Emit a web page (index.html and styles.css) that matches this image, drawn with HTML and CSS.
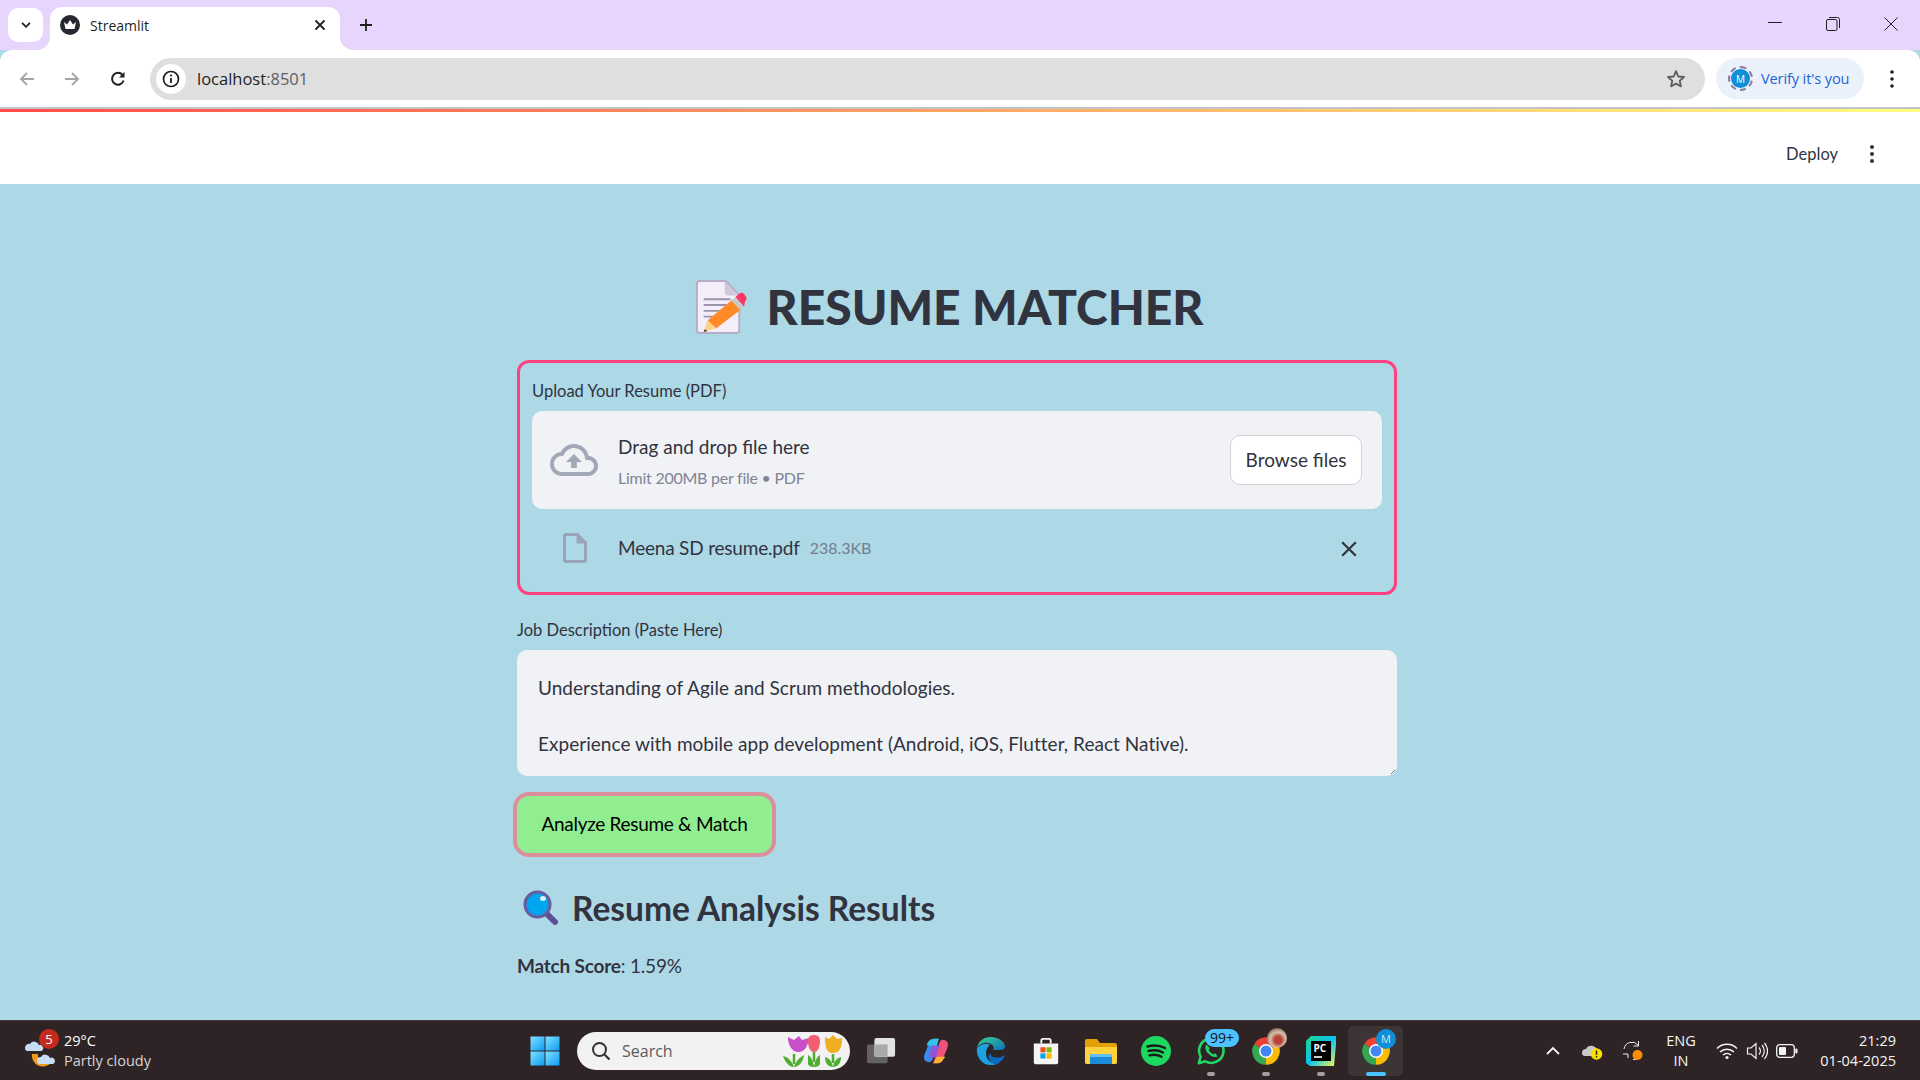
FILE: index.html
```html
<!DOCTYPE html>
<html lang="en">
<head>
<meta charset="utf-8">
<title>Streamlit</title>
<link rel="stylesheet" href="styles.css">
</head>
<body>
<svg class="defs" width="0" height="0" aria-hidden="true">
  <defs>
    <symbol id="chrome" viewBox="0 0 24 24">
      <path d="M12 12L2.47 6.5A11 11 0 0 1 21.53 6.5Z" fill="#EA4335"/>
      <path d="M12 12L21.53 6.5A11 11 0 0 1 12 23Z" fill="#FBBC04"/>
      <path d="M12 12L12 23A11 11 0 0 1 2.47 6.5Z" fill="#34A853"/>
      <circle cx="12" cy="12" r="5.6" fill="#fff"/>
      <circle cx="12" cy="12" r="4.4" fill="#4285F4"/>
    </symbol>
    <linearGradient id="winblue" x1="0" y1="0" x2="1" y2="1"><stop offset="0" stop-color="#7FE3FF"/><stop offset="1" stop-color="#0F9BF5"/></linearGradient>
    <linearGradient id="edgeA" x1="0" y1="0" x2="1" y2="1"><stop offset="0" stop-color="#3BD38C"/><stop offset="1" stop-color="#0C6FBF"/></linearGradient>
    <linearGradient id="pcA" x1="0" y1="0" x2="1" y2="1"><stop offset="0" stop-color="#21D789"/><stop offset=".5" stop-color="#07C3F2"/><stop offset="1" stop-color="#FCF84A"/></linearGradient>
  </defs>
</svg>

<header class="tabstrip">
  <button class="tab-menu"><svg viewBox="0 0 16 16" class="i14"><path d="M3.500 5.500L8 10l4.500-4.500" fill="none" stroke="#1f1f1f" stroke-width="2"/></svg></button>
  <div class="tab">
    <svg class="favicon" viewBox="0 0 20 20"><circle cx="10" cy="10" r="10" fill="#262730"/><path d="M4 7l3 2.500L10 5l3 4.500L16 7l-1.500 7h-9z" fill="#fff"/></svg>
    <span class="tab-title">Streamlit</span>
    <svg class="tab-x" viewBox="0 0 12 12"><path d="M1.500 1.500l9 9M10.500 1.500l-9 9" stroke="#1f1f1f" stroke-width="1.800"/></svg>
  </div>
  <svg class="newtab" viewBox="0 0 14 14"><path d="M7 1v12M1 7h12" stroke="#1f1f1f" stroke-width="1.800"/></svg>
  <div class="winctl">
    <svg viewBox="0 0 14 14" class="i14"><path d="M0 7.500h14" stroke="#222" stroke-width="1"/></svg>
    <svg viewBox="0 0 14 14" class="i14"><rect x=".5" y="2.500" width="10.500" height="11" rx="1.500" fill="none" stroke="#222"/><path d="M3 .5h8.500a2 2 0 0 1 2 2V11" fill="none" stroke="#222"/></svg>
    <svg viewBox="0 0 14 14" class="i14"><path d="M.5.500l13 13M13.500.5l-13 13" stroke="#222" stroke-width="1"/></svg>
  </div>
</header>

<nav class="toolbar">
  <svg class="nav-ic" viewBox="0 0 18 18"><path d="M16 9H3M9 3L3 9l6 6" fill="none" stroke="#a5a5a5" stroke-width="1.800"/></svg>
  <svg class="nav-ic" viewBox="0 0 18 18"><path d="M2 9h13M9 3l6 6-6 6" fill="none" stroke="#a5a5a5" stroke-width="1.800"/></svg>
  <svg class="nav-ic" viewBox="0 0 18 18"><path d="M14.600 10.500A5.900 5.900 0 1 1 13.500 5" fill="none" stroke="#1f1f1f" stroke-width="2"/><path d="M15.500 2v5.500H10z" fill="#1f1f1f"/></svg>
  <div class="omnibox">
    <span class="site-info"><svg viewBox="0 0 18 18" class="i18"><circle cx="9" cy="9" r="7.500" fill="none" stroke="#1f1f1f" stroke-width="1.700"/><path d="M9 8v5" stroke="#1f1f1f" stroke-width="1.800"/><circle cx="9" cy="5.500" r="1.100" fill="#1f1f1f"/></svg></span>
    <span class="url">localhost<span class="url-port">:8501</span></span>
    <svg class="star" viewBox="0 0 20 20"><path d="M10 2.200l2.300 5.300 5.700.5-4.300 3.800 1.300 5.600-5-3-5 3 1.300-5.600L2 8l5.700-.5z" fill="none" stroke="#5c5c5c" stroke-width="1.800" stroke-linejoin="round"/></svg>
  </div>
  <div class="verify">
    <span class="avatar-ring"><span class="avatar">M</span></span>
    <span>Verify it's you</span>
  </div>
  <svg class="kebab" viewBox="0 0 6 20"><circle cx="3" cy="3" r="1.800"/><circle cx="3" cy="10" r="1.800"/><circle cx="3" cy="17" r="1.800"/></svg>
</nav>
<div class="rule"></div>
<div class="rainbow"></div>

<div class="st-header">
  <span class="deploy">Deploy</span>
  <svg class="st-kebab" viewBox="0 0 6 20"><circle cx="3" cy="3" r="2"/><circle cx="3" cy="10" r="2"/><circle cx="3" cy="17" r="2"/></svg>
</div>

<main class="main">
  <div class="column">
    <h1 class="title">
      <svg class="doc-emoji" viewBox="0 0 54 56">
        <path d="M2 4a3 3 0 0 1 3-3h27l14 15v36a3 3 0 0 1-3 3H5a3 3 0 0 1-3-3z" fill="#F3EEF9" stroke="#B5ADC6" stroke-width="2"/>
        <path d="M31 1v12a3 3 0 0 0 3 3h12z" fill="#CFC8DA"/>
        <path d="M9 20h28M9 26h25M9 32h20M9 38h12" stroke="#9C94AC" stroke-width="2"/>
        <path d="M13 42L38 21l9 10-25 19z" fill="#FF8A27"/>
        <path d="M13 42l9 8-13 4z" fill="#FBD48A"/>
        <path d="M9 54l1-3 3 2z" fill="#3a3a3a"/>
        <path d="M38 21l4-3.500 9 10L47 31z" fill="#C9C9C9"/>
        <path d="M42 17.500l4-3.500a4 4 0 0 1 5 .5l1.500 2a4 4 0 0 1-.5 5.500L51 27.500z" fill="#FF3566"/>
      </svg>
      <span>RESUME MATCHER</span>
    </h1>

    <section class="upload-card">
      <label class="field-label">Upload Your Resume (PDF)</label>
      <div class="dropzone">
        <svg class="cloud" viewBox="0 0 24 24"><path fill="#A3A8B8" d="M19.350 10.040C18.670 6.590 15.640 4 12 4 9.110 4 6.600 5.640 5.350 8.040 2.340 8.360 0 10.910 0 14c0 3.310 2.690 6 6 6h13c2.760 0 5-2.240 5-5 0-2.640-2.050-4.780-4.650-4.960zM19 18H6c-2.210 0-4-1.790-4-4 0-2.050 1.530-3.760 3.560-3.970l1.070-.11.5-.95C8.080 7.140 9.940 6 12 6c2.620 0 4.880 1.860 5.390 4.430l.3 1.500 1.530.11c1.560.1 2.780 1.410 2.780 2.960 0 1.650-1.350 3-3 3zM8 13h2.550v3h2.900v-3H16l-4-4z"/></svg>
        <div class="drop-text">
          <div class="drop-main">Drag and drop file here</div>
          <div class="drop-sub">Limit 200MB per file • PDF</div>
        </div>
        <button class="browse">Browse files</button>
      </div>
      <div class="file-row">
        <svg class="file-ic" viewBox="0 0 24 24"><path fill="#9BA2BA" d="M14 2H6c-1.100 0-1.990.9-1.990 2L4 20c0 1.100.89 2 1.990 2H18c1.100 0 2-.9 2-2V8l-6-6zM6 20V4h7v5h5v11H6z"/></svg>
        <span class="file-name">Meena SD resume.pdf</span>
        <span class="file-size">238.3KB</span>
        <svg class="file-x" viewBox="0 0 24 24"><path fill="#31333F" d="M19 6.410L17.590 5 12 10.590 6.410 5 5 6.410 10.590 12 5 17.590 6.410 19 12 13.410 17.590 19 19 17.590 13.410 12z"/></svg>
      </div>
    </section>

    <label class="field-label job-label">Job Description (Paste Here)</label>
    <div class="textarea">
      <p>Understanding of Agile and Scrum methodologies.</p>
      <p>Experience with mobile app development (Android, iOS, Flutter, React Native).</p>
      <svg class="grip" viewBox="0 0 8 8"><path d="M7 3L3 7M7 6L6 7" stroke="#777" stroke-width="1"/></svg>
    </div>

    <button class="analyze">Analyze Resume &amp; Match</button>

    <h2 class="results">
      <svg class="lens" viewBox="0 0 36 36"><path d="M23 23l9 9" stroke="#5C4F94" stroke-width="6" stroke-linecap="round"/><circle cx="14.500" cy="14.500" r="12.500" fill="#00A5F0" stroke="#6A5A9E" stroke-width="3"/><ellipse cx="20" cy="8.500" rx="3" ry="2.500" fill="#D8F2FF"/></svg>
      <span>Resume Analysis Results</span>
    </h2>
    <p class="score"><strong>Match Score</strong>: 1.59%</p>
  </div>
</main>

<footer class="taskbar">
  <div class="weather">
    <svg class="weather-ic" viewBox="0 0 34 34">
      <path d="M8 20a11 11 0 0 0 19 9c-8 1-14-3-13-9z" fill="#F09A1E"/>
      <path d="M1 14a4 4 0 0 1 5-4 5 5 0 0 1 9 1 3 3 0 0 1 2 6H3a3 3 0 0 1-2-3z" fill="#C8DDF3"/>
      <path d="M13 27a3.500 3.500 0 0 1 4-4 5 5 0 0 1 9 1 3 3 0 0 1 3 6H15a3 3 0 0 1-2-3z" fill="#C8DDF3"/>
    </svg>
    <span class="weather-badge">5</span>
    <div class="weather-text">
      <div class="temp">29°C</div>
      <div class="cond">Partly cloudy</div>
    </div>
  </div>
  <div class="apps">
    <span class="app"><svg viewBox="0 0 30 30" class="i30"><rect width="14" height="14" x="0.500" y="0.500" fill="url(#winblue)"/><rect width="14" height="14" x="15.500" y="0.500" fill="url(#winblue)"/><rect width="14" height="14" x="0.500" y="15.500" fill="url(#winblue)"/><rect width="14" height="14" x="15.500" y="15.500" fill="url(#winblue)"/></svg></span>
    <div class="search">
      <svg viewBox="0 0 20 20" class="search-ic"><circle cx="8.500" cy="8.500" r="6.500" fill="none" stroke="#333" stroke-width="2"/><path d="M13.500 13.500l5 5" stroke="#333" stroke-width="2.200"/></svg>
      <span class="search-text">Search</span>
      <svg class="tulips" viewBox="0 0 62 34">
        <path d="M13 20v10" stroke="#4FAE32" stroke-width="2.500"/>
        <path d="M2 22c5 1 9 5 11 11 2-6 5-9 10-12-1 7-5 12-10 12-5 0-9-5-11-11z" fill="#4FAE32"/>
        <path d="M7 3l6 3 5-4 3 4 7-2c-1 8-4 14-11 14C11 18 7 11 7 3z" fill="#C94FC9"/>
        <path d="M33 18v10" stroke="#4FAE32" stroke-width="2.500"/>
        <path d="M27 21c3 2 5 5 6 12 1-7 3-10 6-12v8c0 3-3 4-6 4s-6-1-6-4z" fill="#4FAE32"/>
        <path d="M27 7c0-4 2-6 6-6s6 2 6 6c0 6-2 11-6 11s-6-5-6-11z" fill="#EE5F74"/>
        <path d="M52 20v9" stroke="#4FAE32" stroke-width="2.500"/>
        <path d="M44 23c4 1 7 4 8 10 1-6 4-9 8-10 0 6-3 10-8 10s-8-4-8-10z" fill="#4FAE32"/>
        <path d="M44 3l4 2 4-4 4 4 5-1c0 9-2 15-9 15s-8-7-8-16z" fill="#F0AE22"/>
      </svg>
    </div>
    <span class="app"><svg viewBox="0 0 32 32" class="i30"><rect x="1" y="9" width="22" height="20" rx="2" fill="#636363"/><rect x="9" y="2" width="22" height="20" rx="2" fill="#f1f1f1" fill-opacity=".93"/><rect x="9" y="9" width="14" height="13" fill="#a9a9a9"/></svg></span>
    <span class="app"><svg viewBox="0 0 32 32" class="i30"><path d="M9 28c-5 0-7-4-5-9L9 7c1-3 3-4 6-4h4l-6 20c-1 3-2 5-4 5z" fill="#3B8CF0"/><path d="M23 4c5 0 7 4 5 9l-5 12c-1 3-3 4-6 4h-4l6-20c1-3 2-5 4-5z" fill="#F0527A"/><path d="M12 10h8l-4 13H8z" fill="#8F56D8"/><path d="M17 22h9l-3 4c-1 2-3 3-6 3h-4z" fill="#F9B233"/><path d="M6 10c1-4 4-7 8-7h5l-2 7z" fill="#35C2E8"/></svg></span>
    <span class="app"><svg viewBox="0 0 32 32" class="i30"><path d="M16 1C8 1 2 6 1 13c3-5 9-7 14-5 4 2 5 5 3 7h9c3 0 4-2 4-4C30 5 23 1 16 1z" fill="url(#edgeA)"/><path d="M1 13c-1 9 5 18 15 18 3 0 6-1 8-2-6 1-12-2-13-8-1-5 1-9 4-12-5-2-11 0-14 4z" fill="#1BA1E2"/><path d="M24 29c3-2 6-5 7-9-2 2-5 3-8 3-5 0-8-2-7-5-3 2-3 5-2 7 2 4 6 6 10 4z" fill="#0B6ABF"/></svg></span>
    <span class="app"><svg viewBox="0 0 32 32" class="i30"><path d="M3 8h26v20a2 2 0 0 1-2 2H5a2 2 0 0 1-2-2z" fill="#f5f5f5"/><path d="M11 8V5a2 2 0 0 1 2-2h6a2 2 0 0 1 2 2v3" fill="none" stroke="#f5f5f5" stroke-width="2"/><rect x="10" y="12" width="5.500" height="5.500" fill="#F25022"/><rect x="16.500" y="12" width="5.500" height="5.500" fill="#7FBA00"/><rect x="10" y="18.500" width="5.500" height="5.500" fill="#00A4EF"/><rect x="16.500" y="18.500" width="5.500" height="5.500" fill="#FFB900"/></svg></span>
    <span class="app"><svg viewBox="0 0 34 30" class="i34"><path d="M1 5a2 2 0 0 1 2-2h10l3 4h15a2 2 0 0 1 2 2v17a2 2 0 0 1-2 2H3a2 2 0 0 1-2-2z" fill="#E3A008"/><path d="M1 11h32v15a2 2 0 0 1-2 2H3a2 2 0 0 1-2-2z" fill="#FFD13D"/><rect x="6" y="18" width="22" height="10" fill="#1B8CD8"/><rect x="6" y="18" width="22" height="3" fill="#62C0F2"/></svg></span>
    <span class="app"><svg viewBox="0 0 30 30" class="i30"><circle cx="15" cy="15" r="15" fill="#1ED760"/><path d="M6.500 10.500c6-1.700 12.500-1.200 17.500 1.500M7.500 15c5-1.300 10.500-.8 14.500 1.500M8.500 19.300c4-1 8.500-.6 12 1.400" fill="none" stroke="#1a1a1a" stroke-width="2.400" stroke-linecap="round"/></svg></span>
    <span class="app"><svg viewBox="0 0 32 32" class="i30"><path d="M3 29l2-7A13 13 0 1 1 10 27z" fill="none" stroke="#25D366" stroke-width="2.800" stroke-linejoin="round"/><path d="M11 9.500c-2 2-1 6 2.500 9.500s7 4.500 9.500 2.500l-2.500-3-2 1c-2-.8-4-2.800-4.800-4.800l1-2-3-3z" fill="#25D366"/></svg><span class="badge-99">99+</span><i class="run-dot"></i></span>
    <span class="app"><svg class="i30"><use href="#chrome"/></svg><span class="profile-photo"></span><i class="run-dot"></i></span>
    <span class="app"><svg viewBox="0 0 30 30" class="i30"><path d="M0 5l5-5h25v8l-2 22H4l-4-3z" fill="url(#pcA)"/><rect x="5" y="5" width="20" height="20" fill="#000"/><path d="M8 21h8" stroke="#fff" stroke-width="1.600"/><text x="7.500" y="16" class="pc-text">PC</text></svg><i class="run-dot"></i></span>
    <span class="app app-active"><svg class="i30"><use href="#chrome"/></svg><span class="profile-m">M</span><i class="run-bar"></i></span>
  </div>
  <div class="tray">
    <svg class="tray-ic chev" viewBox="0 0 16 10"><path d="M2 8l6-6 6 6" fill="none" stroke="#f4f4f4" stroke-width="1.800"/></svg>
    <svg class="tray-ic od" viewBox="0 0 22 20"><path d="M1 12a4 4 0 0 1 4-4 6 6 0 0 1 11 1 3 3 0 0 1-1 6H4a3 3 0 0 1-3-3z" fill="#c9c9c9"/><circle cx="15.500" cy="13" r="5.800" fill="#F9E000"/><path d="M15.500 9.500v4.200M15.500 15v1.600" stroke="#222" stroke-width="1.500"/></svg>
    <svg class="tray-ic sync" viewBox="0 0 22 22"><path d="M2 9a8 8 0 0 1 14-4M20 13a8 8 0 0 1-9 6.500" fill="none" stroke="#eee" stroke-width="1"/><path d="M16.500 1v5h-5M1 14h5v4" fill="none" stroke="#eee" stroke-width="1"/><circle cx="15.500" cy="15" r="5" fill="#FF8C00"/></svg>
    <div class="lang"><div>ENG</div><div>IN</div></div>
    <svg class="tray-ic wifi" viewBox="0 0 22 18"><path d="M1 6.500a14 14 0 0 1 20 0M4 10a10 10 0 0 1 14 0M7 13a6 6 0 0 1 8 0" fill="none" stroke="#f4f4f4" stroke-width="1.500"/><circle cx="11" cy="15.500" r="1.600" fill="#f4f4f4"/></svg>
    <svg class="tray-ic vol" viewBox="0 0 22 18"><path d="M1.500 6h3.500l5-4.500v15L5 12H1.500z" fill="none" stroke="#f4f4f4" stroke-width="1.200"/><path d="M13 5.500a5 5 0 0 1 0 7M16 3a9 9 0 0 1 0 12M18.500 1a12 12 0 0 1 0 16" fill="none" stroke="#f4f4f4" stroke-width="1.200"/></svg>
    <svg class="tray-ic batt" viewBox="0 0 22 14"><rect x=".7" y=".7" width="17.600" height="12.600" rx="3" fill="none" stroke="#f4f4f4" stroke-width="1.300"/><rect x="3" y="3" width="7" height="8" rx="1" fill="#f4f4f4"/><rect x="19.300" y="4.500" width="2.200" height="5" rx="1" fill="#f4f4f4"/></svg>
    <div class="clock"><div>21:29</div><div>01-04-2025</div></div>
  </div>
</footer>
</body>
</html>
```
FILE: styles.css
```css
* { box-sizing: border-box; }
html, body { margin: 0; height: 100%; overflow: hidden; }
body {
  width: 1920px; height: 1080px;
  display: flex; flex-direction: column;
  font-family: "Lato", "Noto Sans", sans-serif;
  color: #31333F; background: #ADD8E6;
}
.defs { position: absolute; }
svg { display: block; flex: none; }
.i14 { width: 14px; height: 14px; }
.i18 { width: 18px; height: 18px; }
.i30 { width: 30px; height: 30px; }
.i34 { width: 34px; height: 30px; }

.tabstrip {
  height: 50px; flex: none; background: #E8D5FE;
  display: flex; align-items: flex-end; padding-left: 8px;
}
.tab-menu {
  width: 35px; height: 34px; margin-bottom: 8px; padding: 0;
  border: 0; border-radius: 10px; background: #fff;
  display: flex; align-items: center; justify-content: center;
}
.tab {
  position: relative; width: 290px; height: 43px; margin-left: 7px;
  background: #fff; border-radius: 12px 12px 0 0;
  display: flex; align-items: center; padding: 0 14px 7px 10px;
}
.tab::before, .tab::after {
  content: ""; position: absolute; bottom: 0; width: 14px; height: 14px;
}
.tab::before { left: -14px; background: radial-gradient(circle at 0 0, transparent 14px, #fff 14.500px); }
.tab::after { right: -14px; background: radial-gradient(circle at 100% 0, transparent 14px, #fff 14.500px); }
.favicon { width: 20px; height: 20px; }
.tab-title { margin-left: 10px; flex: 1; font: 14px "Open Sans", sans-serif; color: #1f1f1f; }
.tab-x { width: 12px; height: 12px; }
.newtab { width: 14px; height: 14px; margin: 0 0 18px 19px; }
.winctl { margin: 0 0 19px auto; display: flex; gap: 44px; padding-right: 22px; }
.winctl svg:first-child { height: 14px; margin-top: -2px; }

.toolbar {
  height: 57px; flex: none; background: #fff;
  display: flex; align-items: center; padding: 0 0 0 18px;
  border-radius: 12px 12px 0 0;
}
.nav-ic { width: 18px; height: 18px; margin-right: 27px; }
.nav-ic:nth-child(2) { margin-right: 28px; }
.nav-ic:nth-child(3) { margin-right: 23px; }
.omnibox {
  width: 1555px; height: 42px; border-radius: 21px; background: #DFDFDF;
  display: flex; align-items: center; padding: 0 19px 0 6px;
}
.site-info {
  width: 30px; height: 30px; border-radius: 50%; background: #fff;
  display: flex; align-items: center; justify-content: center;
}
.url { margin-left: 11px; flex: 1; font: 16.500px "Open Sans", sans-serif; color: #1f1f1f; }
.url-port { color: #5e5e5e; }
.star { width: 20px; height: 20px; }
.verify {
  width: 148px; height: 41px; margin-left: 11px; border-radius: 21px; background: #EAF1FB;
  display: flex; align-items: center; padding-left: 12px; gap: 8px;
  font: 14.500px "Open Sans", sans-serif; color: #1A66D6; letter-spacing: -.1px;
}
.avatar-ring {
  width: 25px; height: 25px; border-radius: 50%; border: 2px dashed #8B7BA5;
  display: flex; align-items: center; justify-content: center; flex: none;
}
.avatar {
  width: 19px; height: 19px; border-radius: 50%; background: #0F8FD8; color: #fff;
  font-size: 10px; display: flex; align-items: center; justify-content: center;
}
.kebab { width: 6px; height: 20px; margin-left: 25px; fill: #1f1f1f; }
.rule { height: 2px; flex: none; background: #C4C4C4; }
.rainbow { height: 3px; flex: none; background: linear-gradient(90deg, #FF4B4B, #FFFD80); }

.st-header {
  height: 72px; flex: none; background: #fff;
  display: flex; align-items: center; justify-content: flex-end; padding: 12px 45px 0 0;
}
.deploy { font-size: 16.500px; }
.st-kebab { width: 6px; height: 20px; margin-left: 31px; fill: #31333F; }

.main { flex: 1; min-height: 0; overflow: hidden; display: flex; justify-content: center; padding: 0 6px 0 0; }
.column { width: 880px; padding-top: 86px; }
.title {
  margin: 0 0 16px; height: 74px; padding-right: 15px;
  display: flex; align-items: center; justify-content: center; gap: 19px;
  font-size: 48px; font-weight: 900; line-height: 74px;
}
.doc-emoji { width: 52px; height: 54px; }

.upload-card {
  height: 235px; border: 3px solid #FF4081; border-radius: 12px;
  padding: 14px 12px 0; 
}
.field-label { display: block; height: 28px; font-size: 16.500px; line-height: 28px; }
.dropzone {
  height: 98px; margin-top: 6px; border-radius: 10px; background: #F0F2F6;
  display: flex; align-items: center; padding: 0 20px 0 18px;
}
.cloud { width: 48px; height: 48px; margin-right: 20px; }
.drop-text { flex: 1; padding-top: 2px; }
.drop-main { font-size: 19px; line-height: 28px; }
.drop-sub { font-size: 16px; letter-spacing: -.25px; line-height: 24px; margin-top: 5px; color: #808495; }
.browse {
  width: 132px; height: 50px; padding: 0 0 2px; background: #fff;
  border: 1px solid #D3D4D8; border-radius: 10px;
  font: 19px "Lato", sans-serif; color: #31333F;
}
.file-row { display: flex; align-items: center; height: 78px; padding: 0 0 0 25px; }
.file-ic { width: 36px; height: 36px; margin-right: 25px; }
.file-name { font-size: 19px; letter-spacing: -.2px; margin-top: -2px; }
.file-size { margin-left: 10px; font-size: 16px; color: #72808F; margin-top: -1px; }
.file-x { width: 26px; height: 26px; margin-left: auto; margin-right: 20px; margin-top: 2px; }

.job-label { margin-top: 21px; }
.textarea {
  position: relative; height: 126px; margin-top: 6px; border-radius: 10px;
  background: #F0F2F6; padding: 24px 21px 0; overflow: hidden;
  font-size: 19px; line-height: 28px; letter-spacing: .03px;
}
.textarea p { margin: 0 0 28px; }
.grip { position: absolute; right: 1px; bottom: 1px; width: 8px; height: 8px; }

.analyze {
  display: block; width: 255px; height: 57px; margin-top: 20px; padding: 0 0 2px;
  background: #90EE90; color: #000;
  border: 0; outline: 4px solid #DB8F9B; border-radius: 12px;
  font: 19px "Lato", sans-serif; letter-spacing: -.3px;
}
.results {
  margin: 32px 0 0 6px; height: 46px;
  display: flex; align-items: center; gap: 13px;
  font-size: 33.500px; font-weight: 700; line-height: 46px;
}
.lens { width: 36px; height: 36px; }
.score { margin: 21px 0 0; font-size: 19px; line-height: 28px; letter-spacing: -.2px; }
.score strong { font-weight: 700; }

.taskbar {
  height: 60px; flex: none; background: #2E2426; border-top: 1px solid #45403F;
  display: flex; align-items: center; color: #fff;
  font-family: "Open Sans", sans-serif;
}
.weather { position: relative; width: 517px; display: flex; align-items: center; padding-left: 24px; }
.weather-ic { width: 34px; height: 34px; margin-right: 6px; }
.weather-badge {
  position: absolute; left: 39px; top: -2px; width: 20px; height: 20px; border-radius: 50%;
  background: #C42B1C; color: #fff; font-size: 13px;
  display: flex; align-items: center; justify-content: center;
}
.temp { font-size: 14.500px; line-height: 20px; }
.cond { font-size: 14.500px; line-height: 20px; color: #D8D5D5; }
.apps { display: flex; align-items: center; height: 100%; }
.app {
  position: relative; width: 55px; height: 50px; flex: none;
  display: flex; align-items: center; justify-content: center;
}
.search {
  width: 273px; height: 38px; margin: 0 3px 0 5px; border-radius: 19px; background: #F2F2F2;
  display: flex; align-items: center; padding: 0 7px 0 14px;
}
.search-ic { width: 20px; height: 20px; }
.search-text { flex: 1; margin-left: 11px; color: #5B5B5B; font-size: 16px; }
.tulips { width: 62px; height: 34px; }
.badge-99 {
  position: absolute; left: 22px; top: 3px; width: 34px; height: 18px; border-radius: 9px;
  background: #4CC2FF; color: #111; font-size: 14px; line-height: 18px; text-align: center;
}
.profile-photo {
  position: absolute; right: 6px; top: 2px; width: 20px; height: 20px; border-radius: 50%;
  background: radial-gradient(circle at 55% 60%, #B8423A 22%, #D8C2AE 48%, #7A5A48 80%);
}
.profile-m {
  position: absolute; right: 7px; top: 3px; width: 20px; height: 20px; border-radius: 50%;
  background: #0F8FD8; color: #CDE9FA; font-size: 11px;
  display: flex; align-items: center; justify-content: center;
}
.app-active { background: #3D3435; border-radius: 5px; }
.run-dot { position: absolute; left: 50%; bottom: 0; width: 8px; height: 4px; margin-left: -4px; border-radius: 2px; background: #A0A0A0; }
.run-bar { position: absolute; left: 50%; bottom: 0; width: 20px; height: 4px; margin-left: -10px; border-radius: 2px; background: #4CC2FF; }
.pc-text { font: 700 10px "Open Sans", sans-serif; fill: #fff; }

.tray { flex: 1; height: 100%; display: flex; align-items: center; }
.tray-ic { flex: none; }
.chev { width: 16px; height: 10px; margin-left: 142px; }
.od { width: 22px; height: 20px; margin-left: 20px; }
.sync { width: 22px; height: 22px; margin-left: 19px; }
.lang { width: 40px; margin-left: 17px; text-align: center; font-size: 14.500px; line-height: 20px; color: #f4f4f4; }
.wifi { width: 22px; height: 18px; margin-left: 15px; }
.vol { width: 22px; height: 18px; margin-left: 8px; }
.batt { width: 22px; height: 14px; margin-left: 8px; }
.clock { margin-left: auto; padding-right: 24px; text-align: right; font-size: 14.500px; line-height: 20px; color: #f4f4f4; }
```
